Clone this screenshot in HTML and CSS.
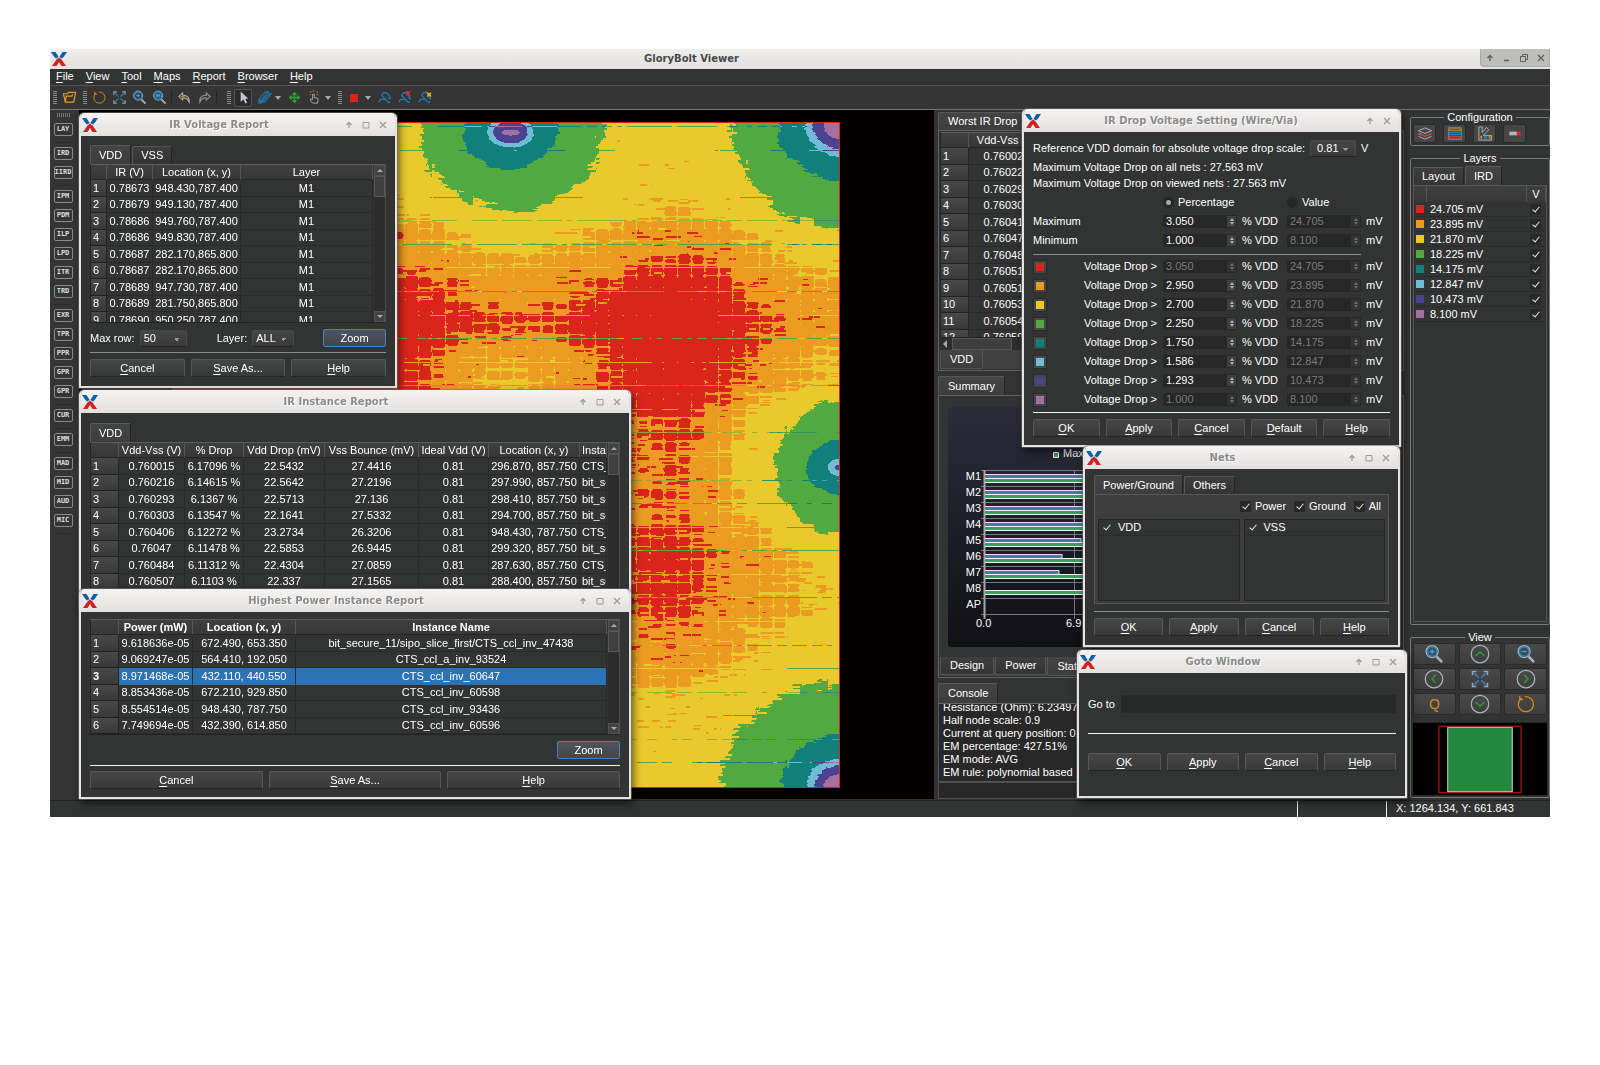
FILE: index.html
```html
<!DOCTYPE html>
<html lang="en">
<head>
<meta charset="utf-8">
<title>GloryBolt Viewer</title>
<link rel="stylesheet" href="styles.css">
</head>
<body>
<svg class="defs" aria-hidden="true">
  <symbol id="logo" viewBox="0 0 16 16"><path d="M0 1h4.500L7.600 6 5 7.400 3 5.500zM16 1h-4.500L8.400 6 11 7.400 13 5.500z" fill="#0d5ea8"/><path d="M8 6.500 10.500 8.500 15 15h-4.500L8 11 5.500 15H1L5.500 8.500z" fill="#d02020"/></symbol>
  <symbol id="up" viewBox="0 0 8 8"><path d="M4 7V1.500M1.500 4 4 1.500 6.500 4" fill="none" stroke="currentColor" stroke-width="1.300"/></symbol>
  <symbol id="box" viewBox="0 0 8 8"><path d="M1 1.500h6v5.500H1z" fill="none" stroke="currentColor"/></symbol>
  <symbol id="x" viewBox="0 0 8 8"><path d="m1 1 6 6M7 1 1 7" fill="none" stroke="currentColor" stroke-width="1.300"/></symbol>
  <symbol id="fit" viewBox="0 0 16 16"><path d="M2 5V2h3M11 2h3v3M14 11v3h-3M5 14H2v-3" fill="none" stroke="#9aa4aa" stroke-width="1.200"/><path d="m3 3 4 4M13 3 9 7M13 13 9 9M3 13l4-4" stroke="#2f86c4" stroke-width="1.200"/></symbol>
  <symbol id="zin" viewBox="0 0 16 16"><circle cx="6.500" cy="6" r="4.800" fill="none" stroke="#a9b4ba"/><circle cx="6.500" cy="6" r="3.700" fill="none" stroke="#1f86cc" stroke-width="1.200"/><path d="M4.500 6h4M6.500 4v4" stroke="#38a0e4" stroke-width="1.200"/><path d="m10 10 4.500 4.500" stroke="#a9b4ba" stroke-width="2"/></symbol>
  <symbol id="zout" viewBox="0 0 16 16"><circle cx="6.500" cy="6" r="4.800" fill="none" stroke="#a9b4ba"/><circle cx="6.500" cy="6" r="3.700" fill="none" stroke="#1f86cc" stroke-width="1.200"/><path d="M4.500 6h4" stroke="#38a0e4" stroke-width="1.200"/><path d="m10 10 4.500 4.500" stroke="#a9b4ba" stroke-width="2"/></symbol>
  <symbol id="spinc" viewBox="0 0 16 16"><path d="M4.500 3.200A6 6 0 1 0 7 2.200M3 1.500V4.500h2.500" fill="none" stroke="#d98a1c"/></symbol>
  <symbol id="snake" viewBox="0 0 16 16"><path d="M2 13l2-3h5l-4-4 2-3h3l3 3v3h2M9 10l3 3h2" fill="none" stroke="#1f78ae" stroke-width="1.500"/></symbol>
</svg>

<main class="app">
  <header class="app-title">
    <svg class="logo"><use href="#logo"/></svg>
    <h1>GloryBolt Viewer</h1>
    <div class="app-ctl">
      <button aria-label="Shade"><svg><use href="#up"/></svg></button>
      <button aria-label="Minimize"><svg viewBox="0 0 8 8"><path d="M1 6.500h5" stroke="currentColor" stroke-width="1.500"/></svg></button>
      <button aria-label="Restore"><svg viewBox="0 0 8 8"><path d="M.5 2.500h5v5h-5zM2.500 2.500v-2h5v5h-2" fill="none" stroke="currentColor"/></svg></button>
      <button aria-label="Close"><svg><use href="#x"/></svg></button>
    </div>
  </header>
  <nav class="menubar">
    <a href="#"><u>F</u>ile</a><a href="#"><u>V</u>iew</a><a href="#"><u>T</u>ool</a><a href="#"><u>M</u>aps</a><a href="#"><u>R</u>eport</a><a href="#"><u>B</u>rowser</a><a href="#"><u>H</u>elp</a>
  </nav>
  <div class="toolbar">
    <i class="grip"></i>
    <button aria-label="Open"><svg viewBox="0 0 16 16"><path d="M3.500 13 1.500 4h4.500l1-1.500h7.500L12.500 13zM3.500 13 4.500 6.500h6l1-2" fill="none" stroke="#e09a28" stroke-width="1.300"/></svg></button>
    <i class="grip"></i>
    <button aria-label="Redraw"><svg><use href="#spinc"/></svg></button>
    <button aria-label="Fit"><svg><use href="#fit"/></svg></button>
    <button aria-label="Zoom in"><svg><use href="#zin"/></svg></button>
    <button aria-label="Zoom area"><svg viewBox="0 0 16 16"><use href="#zout"/><path d="M4.500 4.500h4v3h-4z" fill="none" stroke="#38a0e4"/></svg></button>
    <i class="bar"></i>
    <button aria-label="Undo"><svg viewBox="0 0 16 16"><path d="M6 3 2 7l4 3.500V8.500q5-.5 7 4.500 1-7-7-7.500z" fill="none" stroke="#a7acae" stroke-width="1.200"/><path d="m4 7 4 0" stroke="#d98a1c"/></svg></button>
    <button aria-label="Redo"><svg viewBox="0 0 16 16"><path d="m10 3 4 4-4 3.500V8.500q-5-.5-7 4.500-1-7 7-7.500z" fill="none" stroke="#8d9294" stroke-width="1.200"/></svg></button>
    <i class="bar"></i>
    <i class="grip"></i>
    <button class="down" aria-label="Select"><svg viewBox="0 0 16 16"><path d="M5 1.500v11L8 10l2 4.500 2-1L10 9.500l3-.5z" fill="#b9c6cd"/></svg></button>
    <button aria-label="Ruler"><svg viewBox="0 0 16 16"><path d="M2 10 9 2h3L4 12zM5 13l8-9h2L8 13zM2 10v4h3" fill="none" stroke="#1f78ae" stroke-width="1.300"/></svg></button>
    <b class="caret"></b>
    <button aria-label="Move"><svg viewBox="0 0 16 16"><path d="M8 3v10M3 8h10M6 5l2-2 2 2M6 11l2 2 2-2M5 6 3 8l2 2M11 6l2 2-2 2" fill="none" stroke="#2f9e3a" stroke-width="1.600"/></svg></button>
    <button aria-label="Pick"><svg viewBox="0 0 16 16"><path d="M6 14q-3-3-2.500-4.500L6 10V4.500h1.800V8l4 1-.5 5z" fill="none" stroke="#a7acae"/><path d="M3 2h2M6 1h2M10 2h2M3 5h1M10 5h2" stroke="#d98a1c"/></svg></button>
    <b class="caret"></b>
    <i class="grip"></i>
    <button aria-label="Color"><span class="chip"></span></button>
    <b class="caret"></b>
    <button aria-label="Trace"><svg><use href="#snake"/></svg></button>
    <button aria-label="Clear trace"><svg viewBox="0 0 16 16"><use href="#snake"/><path d="m10 1 4 5M14 1l-4 5" stroke="#e03030" stroke-width="1.500"/></svg></button>
    <button aria-label="Mark trace"><svg viewBox="0 0 16 16"><use href="#snake"/><path d="m9 1 3 3" stroke="#e03030" stroke-width="1.500"/><path d="m11 3 4 4M15 3l-4 4" stroke="#d9c82c" stroke-width="1.500"/></svg></button>
  </div>

  <div class="work">
    <aside class="rail">
      <i class="hgrip"></i>
      <button>LAY</button><hr>
      <button>IRD</button><button>IIRD</button><hr>
      <button>IPM</button><button>PDM</button><button>ILP</button><button>LPD</button><button>ITR</button><button>TRD</button><hr>
      <button>EXR</button><button>TPR</button><button>PPR</button><button>GPR</button><button>GPR</button><hr>
      <button>CUR</button><hr>
      <button>EMM</button><hr>
      <button>MAD</button><button>MID</button><button>AUD</button><button>MIC</button><hr>
    </aside>

    <div class="viewport"><canvas id="map" width="668" height="666"></canvas></div>

    <section class="dock">
      <div class="tabs first"><button class="tab on">Worst IR Drop</button></div>
      <div class="panel">
        <div class="frame worst">
          <table class="data">
            <colgroup><col class="c28"><col class="c76"><col></colgroup>
            <thead><tr><th></th><th>Vdd-Vss (V)</th><th></th></tr></thead>
            <tbody>
              <tr><th>1</th><td>0.760020</td><td></td></tr><tr><th>2</th><td>0.760220</td><td></td></tr><tr><th>3</th><td>0.760293</td><td></td></tr><tr><th>4</th><td>0.760303</td><td></td></tr><tr><th>5</th><td>0.760410</td><td></td></tr><tr><th>6</th><td>0.760470</td><td></td></tr><tr><th>7</th><td>0.760484</td><td></td></tr><tr><th>8</th><td>0.760510</td><td></td></tr><tr><th>9</th><td>0.760512</td><td></td></tr><tr><th>10</th><td>0.760533</td><td></td></tr><tr><th>11</th><td>0.760541</td><td></td></tr><tr><th>12</th><td>0.760590</td><td></td></tr>
            </tbody>
          </table>
        </div>
        <div class="hscroll"><b></b><i></i></div>
        <div class="tabs low"><button class="tab on">VDD</button></div>
      </div>
      <div class="tabs second"><button class="tab on">Summary</button></div>
      <div class="panel">
        <div class="chart">
          <svg class="plot" viewBox="0 0 421 240" preserveAspectRatio="xMinYMin meet">
            <g stroke="#77787f" fill="none"><path d="M33 63.500h388M33 79.500h388M33 95.500h388M33 111.500h388M33 127.500h388M33 143.500h388M33 159.500h388M33 175.500h388M33 191.500h388M33 207.500h388"/><path d="M126.500 63v149"/><path d="M36.500 63v149" stroke="#a5a6ac" stroke-width="2"/></g>
            <g fill="#3b7ea6" stroke="#dfe6ea"><path d="M37 67.500h384v4H37M37 83.500h384v4H37M37 99.500h384v4H37M37 115.500h384v4H37M37 131.500h96v4H37M37 147.500h77v4H37M37 163.500h74v4H37"/></g>
            <g fill="#3c9c60" stroke="#f4f7f4"><path d="M37 71.500h384v4H37M37 87.500h384v4H37M37 103.500h384v4H37M37 119.500h384v4H37M37 135.500h384v4H37M37 151.500h384v4H37M37 167.500h384v4H37M37 183.500h384v4H37"/><path d="M105.500 45.500h5v5h-5z"/></g>
            <g class="axis"><text x="115" y="50">Max</text><g text-anchor="end"><text x="33" y="73">M1</text><text x="33" y="89">M2</text><text x="33" y="105">M3</text><text x="33" y="121">M4</text><text x="33" y="137">M5</text><text x="33" y="153">M6</text><text x="33" y="169">M7</text><text x="33" y="185">M8</text><text x="33" y="201">AP</text></g><text x="28" y="220">0.0</text><text x="118" y="220">6.9</text></g>
          </svg>
        </div>
        <div class="tabs low"><button class="tab">Design</button><button class="tab">Power</button><button class="tab on">Static</button></div>
      </div>
      <div class="tabs third"><button class="tab on">Console</button></div>
      <div class="console"><div>Resistance (Ohm): 6.23497<br>Half node scale: 0.9<br>Current at query position: 0.<br>EM percentage: 427.51%<br>EM mode: AVG<br>EM rule: polynomial based</div></div>
      <input class="command" type="text" aria-label="Console command">
    </section>

    <aside class="side">
      <fieldset class="config"><legend>Configuration</legend>
        <button aria-label="Layers"><svg viewBox="0 0 16 16"><path d="m1 5 7-3 7 3-7 3zM1 11l7 3 7-3M1 9l3-1" fill="none" stroke="#a9b4ba"/><path d="m1 8 7 3 7-3" fill="none" stroke="#d8453c" stroke-width="1.500"/></svg></button>
        <button aria-label="Rows"><svg viewBox="0 0 16 16"><path d="M1 1.500h14v13H1z" fill="none" stroke="#7c8488"/><path d="M2 3h12v2H2z" fill="none" stroke="#c88a22"/><path d="M2 7h12v2H2z" fill="none" stroke="#1f86cc"/><path d="M2 11h12v2H2z" fill="none" stroke="#d8453c"/></svg></button>
        <button aria-label="Palette"><svg viewBox="0 0 16 16"><path d="M1.500 1v14H15v-5H6L12 4 9.500 1.500 5 7V1z" fill="none" stroke="#a9b4ba"/><path d="M3 12h2" stroke="#d98a1c" stroke-width="3"/><path d="M7 12h3" stroke="#1f86cc" stroke-width="3"/><path d="M12 12h2" stroke="#d98a1c" stroke-width="3"/></svg></button>
        <button aria-label="Gradient"><svg viewBox="0 0 16 16"><path d="M2 6h8v4H2z" fill="#aeb6ba"/><path d="M10 6h4v4h-4z" fill="#e02c28"/></svg></button>
      </fieldset>
      <fieldset class="layers"><legend>Layers</legend>
        <div class="tabs"><button class="tab">Layout</button><button class="tab on">IRD</button></div>
        <div class="layer-frame">
          <table class="layer-table">
            <colgroup><col class="c13"><col><col class="c17"></colgroup>
            <thead><tr><th></th><th></th><th>V</th></tr></thead>
            <tbody>
              <tr><td><i class="sw k0"></i></td><td>24.705 mV</td><td><input type="checkbox" aria-label="24.705 mV" checked></td></tr>
              <tr><td><i class="sw k1"></i></td><td>23.895 mV</td><td><input type="checkbox" aria-label="23.895 mV" checked></td></tr>
              <tr><td><i class="sw k2"></i></td><td>21.870 mV</td><td><input type="checkbox" aria-label="21.870 mV" checked></td></tr>
              <tr><td><i class="sw k3"></i></td><td>18.225 mV</td><td><input type="checkbox" aria-label="18.225 mV" checked></td></tr>
              <tr><td><i class="sw k4"></i></td><td>14.175 mV</td><td><input type="checkbox" aria-label="14.175 mV" checked></td></tr>
              <tr><td><i class="sw k5"></i></td><td>12.847 mV</td><td><input type="checkbox" aria-label="12.847 mV" checked></td></tr>
              <tr><td><i class="sw k6"></i></td><td>10.473 mV</td><td><input type="checkbox" aria-label="10.473 mV" checked></td></tr>
              <tr><td><i class="sw k7"></i></td><td>8.100 mV</td><td><input type="checkbox" aria-label="8.100 mV" checked></td></tr>
            </tbody>
          </table>
        </div>
      </fieldset>
      <fieldset class="view"><legend>View</legend>
        <div class="pad">
          <button aria-label="Zoom in"><svg><use href="#zin"/></svg></button>
          <button aria-label="Up"><svg viewBox="0 0 16 16"><circle cx="8" cy="8" r="7" fill="none" stroke="#a9b4ba"/><path d="m4.500 9.500 3.500-3 3.500 3" fill="none" stroke="#2fa83a"/></svg></button>
          <button aria-label="Zoom out"><svg><use href="#zout"/></svg></button>
          <button aria-label="Left"><svg viewBox="0 0 16 16"><circle cx="8" cy="8" r="7" fill="none" stroke="#a9b4ba"/><path d="m9.500 4.500-3 3.500 3 3.500" fill="none" stroke="#2fa83a"/></svg></button>
          <button aria-label="Fit"><svg><use href="#fit"/></svg></button>
          <button aria-label="Right"><svg viewBox="0 0 16 16"><circle cx="8" cy="8" r="7" fill="none" stroke="#a9b4ba"/><path d="m6.500 4.500 3 3.500-3 3.500" fill="none" stroke="#2fa83a"/></svg></button>
          <button class="q">Q</button>
          <button aria-label="Down"><svg viewBox="0 0 16 16"><circle cx="8" cy="8" r="7" fill="none" stroke="#a9b4ba"/><path d="m4.500 6.500 3.500 3 3.500-3" fill="none" stroke="#2fa83a"/></svg></button>
          <button aria-label="Redraw"><svg><use href="#spinc"/></svg></button>
        </div>
        <svg class="mini" viewBox="0 0 137 74"><path d="M0 0h137v74H0z" fill="#050000"/><path d="M35.500 4.500h66v66h-66z" fill="#22883e" stroke="#d8d8d8"/><path d="M26.500 3.500h84v68h-84z" fill="none" stroke="#cf2020"/></svg>
      </fieldset>
    </aside>
  </div>

  <footer class="status"><span class="msg"></span><span class="cell"></span><span class="pos">X: 1264.134, Y: 661.843</span></footer>

  <section class="win w-volt">
    <header><svg class="logo"><use href="#logo"/></svg><h2>IR Voltage Report</h2><div class="ctl"><button aria-label="Shade"><svg><use href="#up"/></svg></button><button aria-label="Maximize"><svg><use href="#box"/></svg></button><button aria-label="Close"><svg><use href="#x"/></svg></button></div></header>
    <div class="body">
      <div class="tabs"><button class="tab on">VDD</button><button class="tab">VSS</button></div>
      <div class="frame h158">
        <table class="data">
          <colgroup><col class="c15"><col class="c46"><col class="c88"><col></colgroup>
          <thead><tr><th></th><th>IR (V)</th><th>Location (x, y)</th><th>Layer</th></tr></thead>
          <tbody>
            <tr><th>1</th><td>0.78673</td><td>948.430,787.400</td><td>M1</td></tr>
            <tr><th>2</th><td>0.78679</td><td>949.130,787.400</td><td>M1</td></tr>
            <tr><th>3</th><td>0.78686</td><td>949.760,787.400</td><td>M1</td></tr>
            <tr><th>4</th><td>0.78686</td><td>949.830,787.400</td><td>M1</td></tr>
            <tr><th>5</th><td>0.78687</td><td>282.170,865.800</td><td>M1</td></tr>
            <tr><th>6</th><td>0.78687</td><td>282.170,865.800</td><td>M1</td></tr>
            <tr><th>7</th><td>0.78689</td><td>947.730,787.400</td><td>M1</td></tr>
            <tr><th>8</th><td>0.78689</td><td>281.750,865.800</td><td>M1</td></tr>
            <tr><th>9</th><td>0.78690</td><td>950.250,787.400</td><td>M1</td></tr>
          </tbody>
        </table>
        <div class="vscroll"><b></b><i></i><b class="dn"></b></div>
      </div>
      <div class="options">
        <label for="maxrow">Max row:</label><select id="maxrow" class="s48"><option>50</option></select>
        <label class="lay" for="layer">Layer:</label><select id="layer" class="s42"><option>ALL</option></select>
        <button class="btn focus">Zoom</button>
      </div>
      <hr>
      <div class="btns"><button class="btn"><u>C</u>ancel</button><button class="btn"><u>S</u>ave As...</button><button class="btn"><u>H</u>elp</button></div>
    </div>
  </section>

  <section class="win w-inst">
    <header><svg class="logo"><use href="#logo"/></svg><h2>IR Instance Report</h2><div class="ctl"><button aria-label="Shade"><svg><use href="#up"/></svg></button><button aria-label="Maximize"><svg><use href="#box"/></svg></button><button aria-label="Close"><svg><use href="#x"/></svg></button></div></header>
    <div class="body">
      <div class="tabs"><button class="tab on">VDD</button></div>
      <div class="frame h158">
        <table class="data">
          <colgroup><col class="c28"><col class="c66"><col class="c59"><col class="c81"><col class="c94"><col class="c70"><col class="c91"><col></colgroup>
          <thead><tr><th></th><th>Vdd-Vss (V)</th><th>% Drop</th><th>Vdd Drop (mV)</th><th>Vss Bounce (mV)</th><th>Ideal Vdd (V)</th><th>Location (x, y)</th><th class="cut">Instance</th></tr></thead>
          <tbody>
            <tr><th>1</th><td>0.760015</td><td>6.17096 %</td><td>22.5432</td><td>27.4416</td><td>0.81</td><td>296.870, 857.750</td><td class="cut">CTS_ccl</td></tr>
            <tr><th>2</th><td>0.760216</td><td>6.14615 %</td><td>22.5642</td><td>27.2196</td><td>0.81</td><td>297.990, 857.750</td><td class="cut">bit_secure</td></tr>
            <tr><th>3</th><td>0.760293</td><td>6.1367 %</td><td>22.5713</td><td>27.136</td><td>0.81</td><td>298.410, 857.750</td><td class="cut">bit_secure</td></tr>
            <tr><th>4</th><td>0.760303</td><td>6.13547 %</td><td>22.1641</td><td>27.5332</td><td>0.81</td><td>294.700, 857.750</td><td class="cut">bit_secure</td></tr>
            <tr><th>5</th><td>0.760406</td><td>6.12272 %</td><td>23.2734</td><td>26.3206</td><td>0.81</td><td>948.430, 787.750</td><td class="cut">CTS_ccl</td></tr>
            <tr><th>6</th><td>0.76047</td><td>6.11478 %</td><td>22.5853</td><td>26.9445</td><td>0.81</td><td>299.320, 857.750</td><td class="cut">bit_secure</td></tr>
            <tr><th>7</th><td>0.760484</td><td>6.11312 %</td><td>22.4304</td><td>27.0859</td><td>0.81</td><td>287.630, 857.750</td><td class="cut">CTS_ccl</td></tr>
            <tr><th>8</th><td>0.760507</td><td>6.1103 %</td><td>22.337</td><td>27.1565</td><td>0.81</td><td>288.400, 857.750</td><td class="cut">bit_secure</td></tr>
          </tbody>
        </table>
        <div class="vscroll"><b></b><i></i></div>
      </div>
    </div>
  </section>

  <section class="win w-power">
    <header><svg class="logo"><use href="#logo"/></svg><h2>Highest Power Instance Report</h2><div class="ctl"><button aria-label="Shade"><svg><use href="#up"/></svg></button><button aria-label="Maximize"><svg><use href="#box"/></svg></button><button aria-label="Close"><svg><use href="#x"/></svg></button></div></header>
    <div class="body">
      <div class="frame h115">
        <table class="data bold">
          <colgroup><col class="c28"><col class="c74"><col class="c103"><col></colgroup>
          <thead><tr><th></th><th>Power (mW)</th><th>Location (x, y)</th><th>Instance Name</th></tr></thead>
          <tbody>
            <tr><th>1</th><td>9.618636e-05</td><td>672.490, 653.350</td><td>bit_secure_11/sipo_slice_first/CTS_ccl_inv_47438</td></tr>
            <tr><th>2</th><td>9.069247e-05</td><td>564.410, 192.050</td><td>CTS_ccl_a_inv_93524</td></tr>
            <tr class="sel"><th>3</th><td>8.971468e-05</td><td>432.110, 440.550</td><td>CTS_ccl_inv_60647</td></tr>
            <tr><th>4</th><td>8.853436e-05</td><td>672.210, 929.850</td><td>CTS_ccl_inv_60598</td></tr>
            <tr><th>5</th><td>8.554514e-05</td><td>948.430, 787.750</td><td>CTS_ccl_inv_93436</td></tr>
            <tr><th>6</th><td>7.749694e-05</td><td>432.390, 614.850</td><td>CTS_ccl_inv_60596</td></tr>
          </tbody>
        </table>
        <div class="vscroll"><b></b><i></i><b class="dn"></b></div>
      </div>
      <div class="options"><button class="btn focus">Zoom</button></div>
      <hr class="white">
      <div class="btns"><button class="btn"><u>C</u>ancel</button><button class="btn"><u>S</u>ave As...</button><button class="btn"><u>H</u>elp</button></div>
    </div>
  </section>

  <section class="win w-set">
    <header><svg class="logo"><use href="#logo"/></svg><h2>IR Drop Voltage Setting (Wire/Via)</h2><div class="ctl"><button aria-label="Shade"><svg><use href="#up"/></svg></button><button aria-label="Close"><svg><use href="#x"/></svg></button></div></header>
    <div class="body">
      <div class="ref"><label for="ref">Reference VDD domain for absolute voltage drop scale:</label><select id="ref" class="s46"><option>0.81</option></select><span>V</span></div>
      <p>Maximum Voltage Drop on all nets : 27.563 mV</p>
      <p>Maximum Voltage Drop on viewed nets : 27.563 mV</p>
      <div class="row modes"><span></span><label class="pct"><input type="radio" name="mode" checked>Percentage</label><label class="val"><input type="radio" name="mode">Value</label></div>
      <div class="row"><label for="mx">Maximum</label><span class="spin"><input id="mx" value="3.050"><i></i></span><span class="unit">% VDD</span><span class="spin"><input value="24.705" aria-label="Maximum mV" disabled><i></i></span><span class="mv">mV</span></div>
      <div class="row"><label for="mn">Minimum</label><span class="spin"><input id="mn" value="1.000"><i></i></span><span class="unit">% VDD</span><span class="spin"><input value="8.100" aria-label="Minimum mV" disabled><i></i></span><span class="mv">mV</span></div>
      <hr class="short">
      <div class="row drop"><label for="d0"><button class="sb k0" aria-label="Color"></button>Voltage Drop &gt;</label><span class="spin"><input id="d0" value="3.050" disabled><i></i></span><span class="unit">% VDD</span><span class="spin"><input value="24.705" aria-label="mV" disabled><i></i></span><span class="mv">mV</span></div>
      <div class="row drop"><label for="d1"><button class="sb k1" aria-label="Color"></button>Voltage Drop &gt;</label><span class="spin"><input id="d1" value="2.950"><i></i></span><span class="unit">% VDD</span><span class="spin"><input value="23.895" aria-label="mV" disabled><i></i></span><span class="mv">mV</span></div>
      <div class="row drop"><label for="d2"><button class="sb k2" aria-label="Color"></button>Voltage Drop &gt;</label><span class="spin"><input id="d2" value="2.700"><i></i></span><span class="unit">% VDD</span><span class="spin"><input value="21.870" aria-label="mV" disabled><i></i></span><span class="mv">mV</span></div>
      <div class="row drop"><label for="d3"><button class="sb k3" aria-label="Color"></button>Voltage Drop &gt;</label><span class="spin"><input id="d3" value="2.250"><i></i></span><span class="unit">% VDD</span><span class="spin"><input value="18.225" aria-label="mV" disabled><i></i></span><span class="mv">mV</span></div>
      <div class="row drop"><label for="d4"><button class="sb k4" aria-label="Color"></button>Voltage Drop &gt;</label><span class="spin"><input id="d4" value="1.750"><i></i></span><span class="unit">% VDD</span><span class="spin"><input value="14.175" aria-label="mV" disabled><i></i></span><span class="mv">mV</span></div>
      <div class="row drop"><label for="d5"><button class="sb k5" aria-label="Color"></button>Voltage Drop &gt;</label><span class="spin"><input id="d5" value="1.586"><i></i></span><span class="unit">% VDD</span><span class="spin"><input value="12.847" aria-label="mV" disabled><i></i></span><span class="mv">mV</span></div>
      <div class="row drop"><label for="d6"><button class="sb k6" aria-label="Color"></button>Voltage Drop &gt;</label><span class="spin"><input id="d6" value="1.293"><i></i></span><span class="unit">% VDD</span><span class="spin"><input value="10.473" aria-label="mV" disabled><i></i></span><span class="mv">mV</span></div>
      <div class="row drop"><label for="d7"><button class="sb k7" aria-label="Color"></button>Voltage Drop &gt;</label><span class="spin"><input id="d7" value="1.000" disabled><i></i></span><span class="unit">% VDD</span><span class="spin"><input value="8.100" aria-label="mV" disabled><i></i></span><span class="mv">mV</span></div>
      <hr class="white">
      <div class="btns"><button class="btn"><u>O</u>K</button><button class="btn"><u>A</u>pply</button><button class="btn"><u>C</u>ancel</button><button class="btn"><u>D</u>efault</button><button class="btn"><u>H</u>elp</button></div>
    </div>
  </section>

  <section class="win w-nets">
    <header><svg class="logo"><use href="#logo"/></svg><h2>Nets</h2><div class="ctl"><button aria-label="Shade"><svg><use href="#up"/></svg></button><button aria-label="Maximize"><svg><use href="#box"/></svg></button><button aria-label="Close"><svg><use href="#x"/></svg></button></div></header>
    <div class="body">
      <div class="tabs"><button class="tab on">Power/Ground</button><button class="tab">Others</button></div>
      <div class="netbox">
        <div class="checks"><label><input type="checkbox" checked>Power</label><label><input type="checkbox" checked>Ground</label><label><input type="checkbox" checked>All</label></div>
        <div class="lists"><div class="list"><label><input type="checkbox" checked>VDD</label></div><div class="list"><label><input type="checkbox" checked>VSS</label></div></div>
      </div>
      <hr>
      <div class="btns"><button class="btn"><u>O</u>K</button><button class="btn"><u>A</u>pply</button><button class="btn"><u>C</u>ancel</button><button class="btn"><u>H</u>elp</button></div>
    </div>
  </section>

  <section class="win w-goto">
    <header><svg class="logo"><use href="#logo"/></svg><h2>Goto Window</h2><div class="ctl"><button aria-label="Shade"><svg><use href="#up"/></svg></button><button aria-label="Maximize"><svg><use href="#box"/></svg></button><button aria-label="Close"><svg><use href="#x"/></svg></button></div></header>
    <div class="body">
      <div class="goto"><label for="goto">Go to</label><input id="goto" type="text"></div>
      <hr class="white">
      <div class="btns"><button class="btn"><u>O</u>K</button><button class="btn"><u>A</u>pply</button><button class="btn"><u>C</u>ancel</button><button class="btn"><u>H</u>elp</button></div>
    </div>
  </section>
</main>
<script src="map.js"></script>
</body>
</html>
```

FILE: styles.css
```css
* { box-sizing: border-box; }
body { margin: 0; background: #fff; font: 11px/13px "Liberation Sans", Arial, sans-serif; color: #fff; }
button, input, select { font: inherit; color: inherit; margin: 0; padding: 0; border: 0; background: none; }
h1, h2, p { margin: 0; font: inherit; }
hr { border: 0; margin: 0; height: 1px; background: #8a8c8b; }
hr.white { background: #f2f2f2; }
u { text-underline-offset: 2px; }
.defs { position: absolute; width: 0; height: 0; }
.logo { width: 16px; height: 16px; flex: none; }
.app { position: relative; margin: 49px 50px; background: #323433; }

.app-title { display: flex; align-items: center; height: 20px; background: linear-gradient(#ededec, #e3e2e0); padding-left: 1px; }
.app-title h1 { flex: 1; text-align: center; margin-right: 164px; font: bold 10px/20px "DejaVu Sans", sans-serif; color: #484848; }
.app-ctl { width: 70px; height: 18px; align-self: flex-start; display: flex; background: #bdbdbb; border-radius: 0 0 0 4px; border: 1px solid #a8a8a6; border-top: 0; }
.app-ctl button { flex: 1; display: grid; place-items: center; color: #5d5d5d; }
.app-ctl svg { width: 8px; height: 8px; }
.menubar { display: flex; gap: 12px; height: 16px; padding: 1px 0 0 6px; align-items: flex-start; }
.menubar a { color: inherit; text-decoration: none; }
.toolbar { display: flex; align-items: center; height: 25px; padding-left: 3px; border-top: 1px solid #555; border-bottom: 1px solid #777; background: #343534; }
.toolbar button { width: 20px; height: 20px; display: grid; place-items: center; }
.toolbar svg { width: 15px; height: 15px; }
.toolbar .down { width: 18px; height: 18px; border: 1px solid #555; background: #2a2b2a; border-radius: 2px; margin: 0 2px 0 1px; }
.grip { width: 4px; height: 13px; margin: 0 2px 0 0; background: repeating-linear-gradient(#8a8a8a 0 1px, transparent 1px 2px); }
.toolbar button + .grip, .caret + .grip { margin-left: 4px; }
.bar + .grip { margin: 0 2px 0 8px; }
.bar { width: 1px; height: 13px; background: #252625; margin: 0 2px; }
.caret { border: 3px solid transparent; border-top: 4px solid #aaa; border-bottom: 0; margin: 0 3px 0 1px; }
.chip { width: 8px; height: 8px; background: #da251c; }

.work { display: grid; grid-template-columns: 29px minmax(0, 1fr) 475px 141px; }
.rail { display: flex; flex-direction: column; align-items: center; gap: 6px; padding: 3px 6px 0 3px; background: #343534; }
.rail button { width: 19px; height: 13px; flex: none; font: bold 7px/11px "DejaVu Sans Mono", monospace; color: #ddd; border: 1px solid #8b8b8b; border-radius: 2px; overflow: hidden; }
.rail hr { width: 16px; height: 1px; background: #2a2b2a; margin-bottom: -2px; }
.hgrip { width: 13px; height: 4px; background: repeating-linear-gradient(90deg, #777 0 1px, transparent 1px 2px); }
.viewport { background: #050000; padding: 12px 0 0 93px; overflow: hidden; }
.viewport canvas { display: block; }

.tabs { display: flex; align-items: flex-end; }
.tab { height: 18px; padding: 0 9px; border: 1px solid #565756; border-bottom: 0; border-right-color: #232423; border-radius: 2px 2px 0 0; background: linear-gradient(#3d3e3d, #333433); margin-right: 1px; white-space: nowrap; }
.tab.on { height: 19px; background: linear-gradient(#434443, #3c3d3c); }
.low { align-items: flex-start; background: #404140; }
.low .tab { border: 1px solid #555; border-top: 0; border-radius: 0 0 2px 2px; }

.dock { padding: 2px 5px 0 4px; }
.dock .first .tab { height: 18px; }
.panel { border: 1px solid #606160; padding: 1px; }
.dock .second { margin-top: 5px; }
.dock .third { margin-top: 5px; }
.dock .third .tab { height: 20px; }
.chart { padding: 10px 8px 10px; }
.plot { display: block; width: 100%; height: 240px; background: linear-gradient(#2b2c3a, #101015); border-radius: 3px; }
.axis { fill: #fff; font-size: 11px; }
.worst { height: 206px; }
.hscroll { height: 12px; display: flex; align-items: center; gap: 5px; padding-left: 3px; background: #2c2d2c; }
.hscroll b { border: 4px solid transparent; border-right: 4px solid #aaa; border-left: 0; }
.hscroll i { width: 60px; height: 12px; background: #3d3e3d; border: 1px solid #555; }
.console { display: flex; flex-direction: column; justify-content: flex-end; height: 79px; overflow: hidden; background: #272827; border: 1px solid #555; border-top-color: #666; padding: 0 4px 2px; line-height: 13px; white-space: nowrap; }
.command { display: block; width: 100%; height: 17px; background: #272827; border: 1px solid #4c4d4c; }

.frame { display: flex; gap: 1px; border: 1px solid #232423; border-top-color: #5a5b5a; border-right-color: #4c4d4c; overflow: hidden; align-items: stretch; }
.h158 { height: 159px; }
.h115 { height: 116px; }
.data { flex: 1; width: 1px; min-width: 0; table-layout: fixed; border-spacing: 0; border-collapse: separate; height: max-content; align-self: flex-start; }
.data th { font-weight: normal; }
.data thead th { height: 15px; padding: 0; background: linear-gradient(#3f403f, #363736); border-right: 1px solid #555; border-bottom: 1px solid #242524; white-space: nowrap; overflow: hidden; }
.bold thead th, .bold .sel th { font-weight: bold; }
.data tbody th { text-align: left; padding: 0 0 0 2px; background: linear-gradient(#474847, #383938); border-bottom: 1px solid #202120; border-right: 1px solid #242524; }
.data td { padding: 0; text-align: center; white-space: nowrap; border-right: 1px solid #292a29; border-bottom: 1px solid #292a29; overflow: hidden; }
.data tbody tr { height: 17px; }
.data tbody tr:nth-child(even) { height: 16px; }
.data .cut { text-align: left; padding-left: 2px; }
.sel td { background: #2d72b5; border-bottom-color: #2d72b5; }
.c13 { width: 13px; } .c15 { width: 16px; } .c17 { width: 19px; } .c28 { width: 28px; } .c46 { width: 46px; } .c59 { width: 59px; }
.c66 { width: 66px; } .c70 { width: 70px; } .c74 { width: 74px; } .c76 { width: 76px; } .c81 { width: 81px; } .c88 { width: 88px; }
.c91 { width: 91px; } .c94 { width: 94px; } .c103 { width: 103px; }
.vscroll { width: 11px; flex: none; display: flex; flex-direction: column; background: #2b2c2b; }
.vscroll b { height: 11px; background: #414241; border: 1px solid #505150; display: grid; place-items: center; }
.vscroll b::after { content: ""; border: 3px solid transparent; border-bottom: 3px solid #aaa; border-top: 0; }
.vscroll b.dn { margin-top: auto; }
.vscroll b.dn::after { border: 3px solid transparent; border-top: 3px solid #aaa; border-bottom: 0; }
.vscroll i { height: 21px; background: #3e3f3e; border: 1px solid #565756; }

.side { padding: 1px 0 0 1px; display: flex; flex-direction: column; }
fieldset { margin: 0; min-width: 0; border: 1px solid #7a7b7a; border-radius: 2px; padding: 1px 2px 2px; }
legend { margin: 0 auto; padding: 0 3px; line-height: 12px; }
.config button { width: 23px; height: 19px; display: grid; place-items: center; background: #454645; border: 1px solid #2a2b2a; border-radius: 2px; margin-right: 7px; float: left; }
.config svg { width: 16px; height: 15px; }
.layers { margin-top: 6px; padding-top: 2px; }
.layers .tab { height: 18px; padding: 0 8px; }
.layers .tab.on { height: 19px; }
.layer-frame { height: 437px; border: 1px solid #555; }
.layer-table { width: 100%; table-layout: fixed; border-spacing: 0; }
.layer-table th { height: 16px; padding: 0; font-weight: normal; background: linear-gradient(#3f403f, #363736); border-right: 1px solid #555; }
.layer-table td { height: 15px; padding: 0; border-bottom: 1px solid #292a29; line-height: 13px; }
.layer-table td:nth-child(2) { padding-left: 3px; }
.layer-table td:last-child { padding-left: 3px; }
.sw { display: block; width: 8px; height: 8px; margin-left: 2px; }
.k0 { --c: #da251c; } .k1 { --c: #eb9a22; } .k2 { --c: #eac92c; } .k3 { --c: #51a93f; }
.k4 { --c: #10807c; } .k5 { --c: #6fbcd6; } .k6 { --c: #4b4292; } .k7 { --c: #a5709f; }
.sw { background: var(--c); }
input[type=checkbox] { appearance: none; display: block; width: 11px; height: 11px; background: #272827; flex: none; position: relative; }
input[type=checkbox]:checked::after { content: ""; position: absolute; left: 4px; top: 1px; width: 3px; height: 6px; border: solid #e4e4e4; border-width: 0 1px 1px 0; transform: rotate(40deg); box-sizing: content-box; }
.view { margin-top: 6px; padding: 0 2px 1px; }
.pad { display: grid; grid-template-columns: repeat(3, 1fr); gap: 3px; }
.pad button { height: 22px; display: grid; place-items: center; background: linear-gradient(#484948, #3c3d3c); border: 1px solid #2a2b2a; border-radius: 2px; }
.pad svg { width: 20px; height: 20px; }
.pad .q { color: #d98a1c; font-size: 14px; }
.mini { display: block; width: 100%; height: 74px; margin-top: 7px; }

.status { display: flex; height: 17px; margin-top: 1px; border-top: 1px solid #222; }
.msg { flex: 1; }
.cell { width: 90px; border: solid #f2f2f2; border-width: 0 1px; }
.pos { width: 163px; padding: 1px 0 0 9px; }

.win { position: absolute; background: #323433; border: 2px solid #e4e3e1; border-top: 0; border-radius: 5px 5px 1px 1px; box-shadow: 0 0 0 1px #77777788, 2px 4px 8px #000000a0; overflow: hidden; }
.win header { display: flex; align-items: center; height: 23px; margin: 0 -2px; padding: 0 6px 0 3px; background: linear-gradient(#f4f3f2, #e2e1df); border-radius: 5px 5px 0 0; }
.win h2 { flex: 1; text-align: center; font: bold 10px/22px "DejaVu Sans", sans-serif; color: #8b8b8b; text-shadow: 1px 1px #fff; white-space: nowrap; }
.ctl { display: flex; color: #9c9c9c; }
.ctl button { width: 17px; display: grid; place-items: center; }
.ctl svg { width: 8px; height: 8px; }
.body { padding: 9px 9px 9px; }
.w-volt { left: 29px; top: 64px; width: 318px; }
.w-inst { left: 29px; top: 341px; width: 552px; height: 220px; }
.w-power { left: 29px; top: 540px; width: 552px; }
.w-set { left: 972px; top: 60px; width: 379px; }
.w-nets { left: 1033px; top: 397px; width: 317px; }
.w-goto { left: 1027px; top: 601px; width: 330px; }
.w-volt .tab, .w-inst .tab { padding: 0 8px; }
.w-inst .body { padding-top: 10px; }
.w-power .body { padding: 7px 9px 8px; }

.btns { display: flex; gap: 6px; margin-top: 6px; }
.btn { flex: 1; height: 18px; border: 1px solid #565756; border-radius: 2px; background: linear-gradient(#454645, #383938); border-bottom-color: #232423; }
.btn.focus { flex: none; width: 63px; margin-left: auto; border: 1px solid #4a82bb; background: linear-gradient(#4e535c, #42464e); }
.options { display: flex; align-items: center; margin: 6px 0 5px; }
select { appearance: none; height: 17px; padding: 0 3px; border: 1px solid #474847; border-bottom-color: #222; border-radius: 2px; background: linear-gradient(45deg, transparent 50%, #999 50%) calc(100% - 9px) 7px / 3px 3px no-repeat, linear-gradient(-45deg, transparent 50%, #999 50%) calc(100% - 6px) 7px / 3px 3px no-repeat, linear-gradient(#444544, #393a39); }
.s48 { width: 47px; margin-left: 5px; }
.s42 { width: 42px; margin-left: 5px; }
.s46 { width: 46px; padding-left: 6px; }
.lay { margin-left: 30px; }

.w-power .options { margin-bottom: 6px; }
.w-power .btns { margin-top: 5px; }
.w-set .body { padding-top: 8px; padding-bottom: 8px; }
.w-set .ref { display: flex; align-items: center; gap: 5px; white-space: nowrap; }
.w-set .ref select { margin-left: auto; }
.w-set .ref span { width: 29px; }
.w-set p { margin-top: 3px; }
.w-set .ref + p { margin-top: 4px; }
.row { display: grid; grid-template-columns: 130px 74px 50px 74px 1fr; align-items: center; height: 19px; }
.row .unit { padding-left: 5px; }
.row .mv { padding-left: 5px; }
.modes { margin-top: 2px; height: 20px; }
.modes label { display: flex; align-items: center; gap: 4px; }
.modes .pct { grid-column: 2; }
.modes .val { grid-column: 4; }
input[type=radio] { appearance: none; width: 11px; height: 11px; border-radius: 50%; background: #262726; border: 3px solid #262726; }
input[type=radio]:checked { background: #a8a8a8; }
.short { width: 328px; margin: 4px 0 2px; }
.drop label { display: flex; align-items: center; justify-content: space-between; padding-right: 6px; }
.sb { width: 14px; height: 14px; border: 3px solid #454645; outline: 1px solid #2a2b2a; outline-offset: -1px; background: var(--c); }
.spin { display: flex; align-items: center; height: 13px; background: #262726; border-radius: 2px; }
.spin input { flex: 1; width: 40px; height: 13px; padding-left: 3px; }
.spin input:disabled { color: #7d7d7d; }
.spin i { width: 9px; height: 11px; background: #3f403f; display: flex; flex-direction: column; justify-content: center; align-items: center; gap: 1px; margin-right: 1px; }
.spin i::before, .spin i::after { content: ""; border: 2px solid transparent; }
.spin i::before { border-bottom: 3px solid #b0b0b0; border-top: 0; }
.spin i::after { border-top: 3px solid #b0b0b0; border-bottom: 0; }
.spin input:disabled + i { opacity: .5; }
.w-set hr.white { margin-top: 3px; }

.w-nets .body { padding-top: 6px; }
.w-nets .tab { padding: 0 8px; }
.netbox { border: 1px solid #565756; background: #3c3d3c; padding: 5px 3px 2px; }
.checks { display: flex; justify-content: flex-end; gap: 8px; padding-right: 4px; }
.checks label, .list label { display: flex; align-items: center; gap: 4px; }
.lists { display: grid; grid-template-columns: 1fr 1fr; gap: 4px; margin-top: 6px; }
.list { height: 82px; background: #323433; border: 1px solid #252625; }
.list label { height: 16px; padding-left: 2px; gap: 6px; border-bottom: 1px solid #2a2b2a; }
.list input { background: none; }
.w-nets hr { margin-top: 7px; }
.goto { display: flex; align-items: center; gap: 6px; margin: 13px 0 20px; }
.goto input { flex: 1; height: 18px; background: #272827; border-radius: 2px; }
.w-goto .btns { margin-top: 19px; }
.w-goto .body { padding-bottom: 25px; }
```

FILE: map.js
```js
// Voltage-drop heat map: hot field on a coarse grid, cold spots at the supply pads.
(function () {
  var cv = document.getElementById('map'), W = cv.width, H = cv.height;
  var ctx = cv.getContext('2d'), img = ctx.createImageData(W, H);
  var C = [[218,37,28],[235,154,34],[234,201,44],[81,169,63],[16,128,124],[111,188,214],[75,66,146],[165,112,159]];
  var XS = [224,268,308,348,388,428,468,508,548,588,628,668];
  var G = [
    [0,-1,-1,-1,-1,-1,-1,-1,-1,-1,-1,-1,-1],
    [55,-1,-1,-1,-1,-1,-1,-.6,-.5,-1,-1,-1,-1],
    [80,-.5,-1,-1,-1,-1,-1,-.4,0,-.7,-1,-1,-1],
    [93,.1,-.6,-1,-1,-1,-.8,-.2,.2,-.3,-1,-1,-1],
    [108,.5,-.1,-1,-1,-.7,-.2,.3,.5,.2,-.5,-1,-1],
    [123,.8,.3,-.2,-.2,-.1,.3,.6,.7,.6,.1,-.5,-1],
    [136,1,.6,.2,.2,.3,.5,1,1.1,.9,.2,-.1,-.5],
    [153,1.4,.8,.5,.5,.5,.8,1.3,1.4,1.1,.5,.2,0],
    [168,1.8,1.1,.6,.6,.7,1.1,1.7,1.8,1.3,.8,.3,.1],
    [183,2,1.3,.9,.8,.9,1.3,1.9,2,1.5,.9,.5,.2],
    [198,2.1,1.3,1,1,1,1.4,2,2.1,1.6,1,.6,.2],
    [213,2,1.2,.8,.8,.9,1.3,1.9,2.1,1.6,.9,.6,.2],
    [228,1.9,1.1,.5,.4,.7,1.2,1.8,2.1,1.6,.8,.5,.1],
    [243,1.8,.8,.2,.2,.5,.9,1.6,2,1.4,.7,.1,-.2],
    [258,1.5,.6,-.2,-.3,.1,.8,1.5,1.9,1.2,.5,-.2,-.5],
    [278,1.3,.5,-.2,-.3,.1,.7,1.3,1.6,.7,-.3,-1,-1],
    [308,.9,.5,0,0,0,.5,.9,1.1,.4,-.7,-1,-1],
    [343,.9,.5,0,0,0,.5,.8,1,.2,-1,-1,-1],
    [378,.9,.5,0,0,0,.5,.8,.9,.3,-.8,-1,-1],
    [408,.9,.5,0,0,0,.5,1,1,.5,-.2,-1,-1],
    [438,1,.5,0,0,0,.5,1.2,1.3,.7,.3,-.3,-.8],
    [463,1,.5,0,0,0,.5,1.3,1.2,.8,.4,0,-.6],
    [488,1,.5,0,0,0,.5,1,1.2,.6,.3,0,-.4],
    [508,.9,.5,0,0,0,.5,.8,1,.5,.1,-.4,-.8],
    [523,.5,.2,0,0,0,.2,.6,.6,.3,-.2,-.9,-1],
    [538,.3,0,0,0,0,0,.4,.6,.2,-.5,-1,-1],
    [558,0,0,0,0,0,0,.1,.2,-.3,-1,-1,-1],
    [580,-.5,-.5,-.5,-.5,-.5,-.5,-.5,-.5,-.9,-1,-1,-1],
    [666,-1,-1,-1,-1,-1,-1,-1,-1,-1,-1,-1,-1]
  ];
  // centre x, y, then [rx, ry] per level from green inward
  var SPOTS = [
    [338,10,[91,76],[47,36],[23,15],[17,11],[9,3]],
    [668,2,[106,104],[62,55],[35,31],[28,24],[17,15]],
    [668,345,[65,66],[34,27],[13,9],[6,3]],
    [668,666,[117,106],[59,55],[34,31],[27,24],[18,15]]
  ];
  function h(a, b, s) {
    var n = Math.imul(a | 0, 374761393) + Math.imul(b | 0, 668265263) + Math.imul(s, 974711);
    n = Math.imul(n ^ (n >>> 13), 1274126177);
    return ((n ^ (n >>> 16)) >>> 0) / 4294967296;
  }
  function base(x, y) {
    var r = 0, c = 0;
    while (r < G.length - 2 && y >= G[r + 1][0]) r++;
    while (c < XS.length - 2 && x >= XS[c + 1]) c++;
    var ty = (y - G[r][0]) / (G[r + 1][0] - G[r][0]);
    var tx = Math.max(0, Math.min(1, (x - XS[c]) / (XS[c + 1] - XS[c])));
    var a = G[r][c + 1] * (1 - tx) + G[r][c + 2] * tx, b = G[r + 1][c + 1] * (1 - tx) + G[r + 1][c + 2] * tx;
    return a * (1 - ty) + b * ty;
  }
  var STRONG = { 0:1, 5:1, 7:1, 9:1, 16:1, 18:1, 20:1, 22:1, 27:1 }, SOFT = { 4:1, 11:1, 13:1, 15:1, 24:1, 26:1 };
  for (var y = 0; y < H; y++) {
    var k = Math.round((y - 4) / 23.57), line = Math.round(4 + k * 23.57) === y;
    for (var x = 0; x < W; x++) {
      var cx = Math.floor(x / 13.65), ry = y / 11.8, cy = Math.floor(ry);
      var fx = Math.abs(x / 13.65 - cx - .5) * 2, fy = Math.abs(ry - cy - .5) * 2;
      var row = y >> 1, len = 7 + Math.floor(h(row, 3, 5) * 9), seg = Math.floor((x + h(row, 1, 2) * 40) / len);
      var dash = h(seg, row, 9), v = base(cx * 13.65 + 7, y);
      v += (h(cx, cy, 1) - .5) * .28 + (h(0, cy, 4) - .5) * .3;
      v += .2 - .45 * Math.pow(fx, 6) - (.25 + .3 * h(cx, cy, 6)) * Math.pow(fy, 3);
      v += (h(row, cx, 8) - .5) * .26;
      if (dash > .93) v += .5; else if (dash < .05) v -= .35;
      if (line) v -= .7;
      var lv = v > 1 ? 0 : v > 0 ? 1 : 2, j = (h(cx, cy, 21) - .5) * .09 + (h(cx, row, 22) - .5) * .06 + (h(Math.floor(x / 5), row, 25) - .5) * .03;
      for (var s = 0; s < SPOTS.length; s++) {
        var S = SPOTS[s];
        for (var n = 2; n < S.length; n++) {
          var dx = (x - S[0]) / S[n][0], dy = (y - S[1]) / S[n][1], d = Math.sqrt(dx * dx + dy * dy) + j;
          if (line && k % 2) d *= .82;
          if (d < 1) lv = Math.max(lv, n + 1);
        }
      }
      var c = C[lv], a = 1;
      if (line && (STRONG[k] || SOFT[k]) && h(Math.floor(x / 5), k, 31) > .28) {
        c = C[lv < 3 ? 3 : Math.min(7, lv + 1)];
        if (SOFT[k]) a = .55;
      }
      var o = (y * W + x) * 4;
      for (var q = 0; q < 3; q++) img.data[o + q] = c[q] * a + C[lv][q] * (1 - a);
      img.data[o + 3] = 255;
    }
  }
  ctx.putImageData(img, 0, 0);
  ctx.strokeStyle = '#d2281e';
  ctx.strokeRect(.5, .5, W - 1, H - 1);
})();
```
